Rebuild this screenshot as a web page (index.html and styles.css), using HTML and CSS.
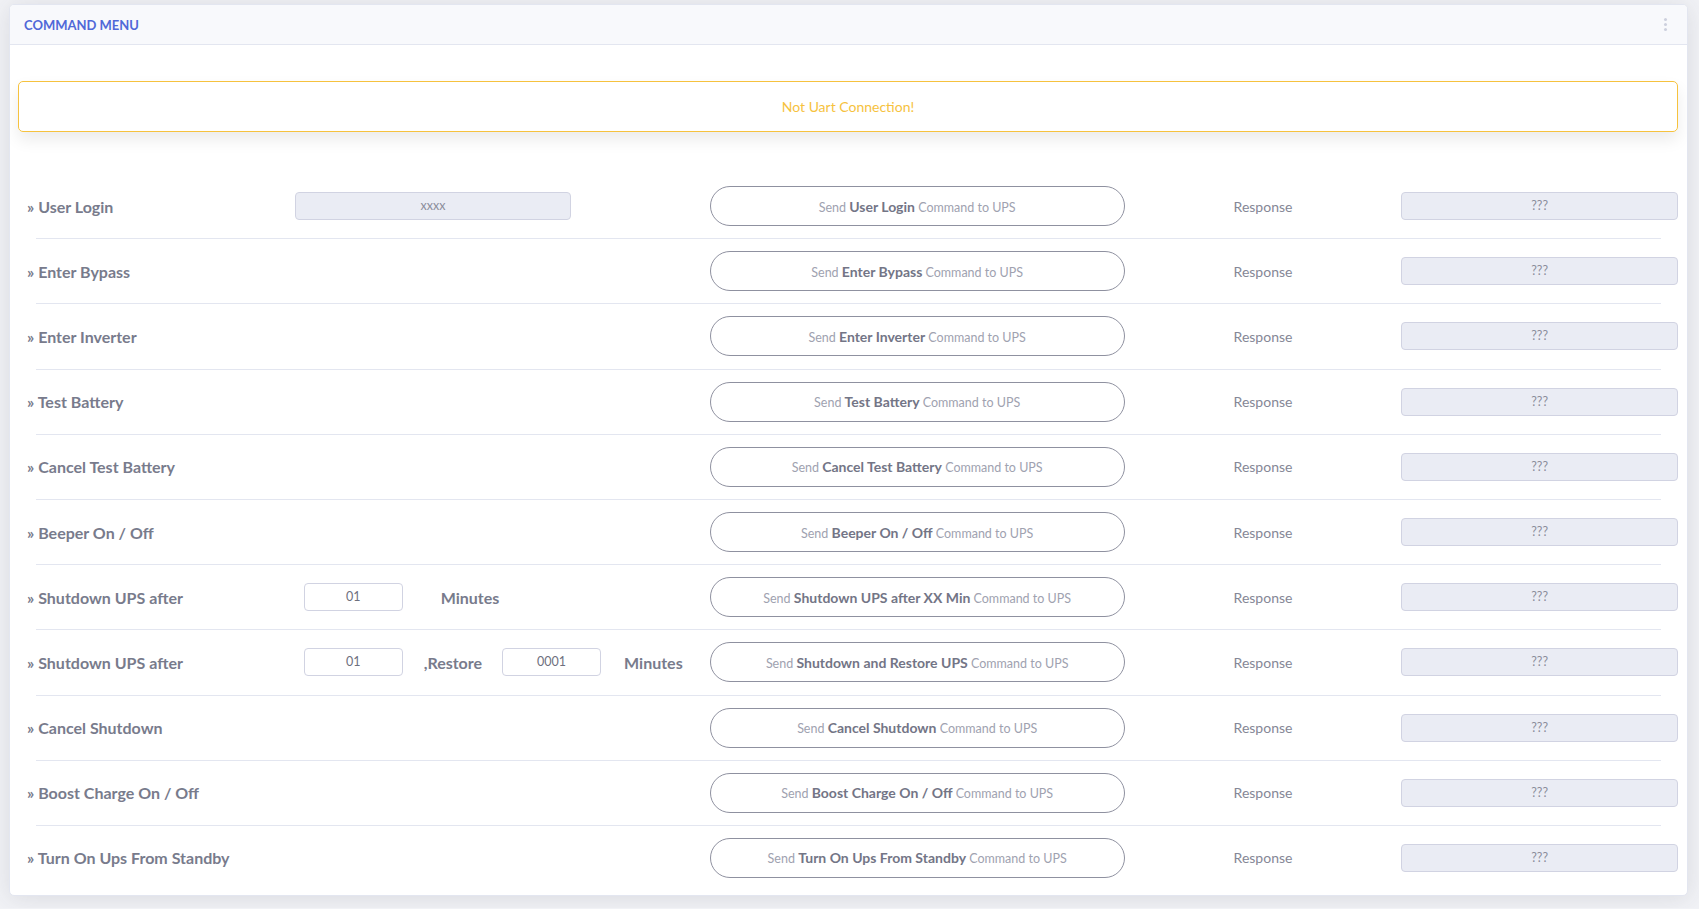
FILE: index.html
```html
<!DOCTYPE html>
<html lang="en">
<head>
    <meta charset="UTF-8">
    <title>Command Menu</title>
    <link rel="stylesheet" href="styles.css">
</head>
<body>
    <div class="page">
        <div class="card">
            <div class="card-header">
                <h6 class="card-title">COMMAND MENU</h6>
                <span class="kebab"><i></i><i></i><i></i></span>
            </div>
            <div class="card-body">
                <div class="alert">Not Uart Connection!</div>

                <div class="cmd-list">
                    <div class="cmd-row">
                        <div class="cmd-label">&raquo; User Login</div>
                        <div class="cmd-extra"><div class="field field-wide">xxxx</div></div>
                        <button class="cmd-btn">Send <b>User Login</b> Command to UPS</button>
                        <div class="cmd-resp">Response</div>
                        <div class="field resp-box">???</div>
                    </div>
                    <div class="cmd-row">
                        <div class="cmd-label">&raquo; Enter Bypass</div>
                        <div class="cmd-extra"></div>
                        <button class="cmd-btn">Send <b>Enter Bypass</b> Command to UPS</button>
                        <div class="cmd-resp">Response</div>
                        <div class="field resp-box">???</div>
                    </div>
                    <div class="cmd-row">
                        <div class="cmd-label">&raquo; Enter Inverter</div>
                        <div class="cmd-extra"></div>
                        <button class="cmd-btn">Send <b>Enter Inverter</b> Command to UPS</button>
                        <div class="cmd-resp">Response</div>
                        <div class="field resp-box">???</div>
                    </div>
                    <div class="cmd-row">
                        <div class="cmd-label">&raquo; Test Battery</div>
                        <div class="cmd-extra"></div>
                        <button class="cmd-btn">Send <b>Test Battery</b> Command to UPS</button>
                        <div class="cmd-resp">Response</div>
                        <div class="field resp-box">???</div>
                    </div>
                    <div class="cmd-row">
                        <div class="cmd-label">&raquo; Cancel Test Battery</div>
                        <div class="cmd-extra"></div>
                        <button class="cmd-btn">Send <b>Cancel Test Battery</b> Command to UPS</button>
                        <div class="cmd-resp">Response</div>
                        <div class="field resp-box">???</div>
                    </div>
                    <div class="cmd-row">
                        <div class="cmd-label">&raquo; Beeper On / Off</div>
                        <div class="cmd-extra"></div>
                        <button class="cmd-btn">Send <b>Beeper On / Off</b> Command to UPS</button>
                        <div class="cmd-resp">Response</div>
                        <div class="field resp-box">???</div>
                    </div>
                    <div class="cmd-row">
                        <div class="cmd-label">&raquo; Shutdown UPS after</div>
                        <div class="cmd-extra inline">
                            <div class="field field-small">01</div>
                            <span class="unit unit-min">Minutes</span>
                        </div>
                        <button class="cmd-btn">Send <b>Shutdown UPS after XX Min</b> Command to UPS</button>
                        <div class="cmd-resp">Response</div>
                        <div class="field resp-box">???</div>
                    </div>
                    <div class="cmd-row">
                        <div class="cmd-label">&raquo; Shutdown UPS after</div>
                        <div class="cmd-extra inline">
                            <div class="field field-small">01</div>
                            <span class="unit unit-restore">,Restore</span>
                            <div class="field field-small field-restore">0001</div>
                            <span class="unit unit-min2">Minutes</span>
                        </div>
                        <button class="cmd-btn">Send <b>Shutdown and Restore UPS</b> Command to UPS</button>
                        <div class="cmd-resp">Response</div>
                        <div class="field resp-box">???</div>
                    </div>
                    <div class="cmd-row">
                        <div class="cmd-label">&raquo; Cancel Shutdown</div>
                        <div class="cmd-extra"></div>
                        <button class="cmd-btn">Send <b>Cancel Shutdown</b> Command to UPS</button>
                        <div class="cmd-resp">Response</div>
                        <div class="field resp-box">???</div>
                    </div>
                    <div class="cmd-row">
                        <div class="cmd-label">&raquo; Boost Charge On / Off</div>
                        <div class="cmd-extra"></div>
                        <button class="cmd-btn">Send <b>Boost Charge On / Off</b> Command to UPS</button>
                        <div class="cmd-resp">Response</div>
                        <div class="field resp-box">???</div>
                    </div>
                    <div class="cmd-row">
                        <div class="cmd-label">&raquo; Turn On Ups From Standby</div>
                        <div class="cmd-extra"></div>
                        <button class="cmd-btn">Send <b>Turn On Ups From Standby</b> Command to UPS</button>
                        <div class="cmd-resp">Response</div>
                        <div class="field resp-box">???</div>
                    </div>
                </div>
            </div>
        </div>
    </div>
</body>
</html>
```

FILE: styles.css
```css
body {
    margin: 0;
    font-family: Lato, "Open Sans", sans-serif;
    background-color: #f1f2f6;
    color: #858796;
}
.page {
    padding: 4px 11px 12px 9px;
}
.card {
    background: #fff;
    border: 1px solid #e3e6f0;
    border-radius: 5px;
    box-shadow: 0 2px 24px rgba(58, 59, 69, 0.12);
    overflow: hidden;
}
.card-header {
    height: 39px;
    display: flex;
    align-items: center;
    justify-content: space-between;
    padding: 0 20px 0 14px;
    background-color: #f8f9fc;
    border-bottom: 1px solid #e3e6f0;
}
.card-title {
    margin: 0;
    font-size: 13px;
    font-weight: 700;
    color: #5068d8;
}
.kebab {
    display: flex;
    flex-direction: column;
    gap: 2px;
}
.kebab i {
    width: 3px;
    height: 3px;
    border-radius: 50%;
    background: #cdd0de;
}
.card-body {
    padding: 36px 9px 5px 8px;
}

/* warning alert */
.alert {
    height: 49px;
    line-height: 49px;
    border: 1px solid #f6c23e;
    border-radius: 5px;
    text-align: center;
    font-size: 14px;
    color: #f6c23e;
    box-shadow: 0 8px 16px rgba(0, 0, 0, 0.08);
}

/* command rows */
.cmd-list {
    margin-top: 42px;
}
.cmd-row {
    display: grid;
    grid-template-columns: repeat(12, 1fr);
    align-items: center;
    height: 64.2px;
}
.cmd-row + .cmd-row {
    background: linear-gradient(#e3e6f0, #e3e6f0) no-repeat 18px 0 / calc(100% - 35px) 1px;
    padding-top: 1px;
}
.cmd-label {
    grid-column: span 2;
    padding-left: 9px;
    font-size: 16px;
    font-weight: 700;
    color: #787b8c;
}
.cmd-extra {
    grid-column: span 3;
}
.cmd-extra.inline {
    display: flex;
    align-items: center;
    padding-left: 9px;
}
.field {
    box-sizing: border-box;
    height: 28px;
    line-height: 26px;
    border: 1px solid #d1d3e2;
    border-radius: 4px;
    background: #eaecf4;
    text-align: center;
    font-size: 12.5px;
    color: #8a8c9b;
}
.field-wide {
    width: 66.67%;
}
.field-small {
    width: 99px;
    background: #fff;
    color: #6e707e;
}
.unit {
    font-size: 16px;
    font-weight: 700;
    color: #787b8c;
}
.unit-min {
    margin-left: 38px;
}
.unit-restore {
    margin-left: 21px;
}
.field-restore {
    margin-left: 20px;
}
.unit-min2 {
    margin-left: 23px;
}
.cmd-btn {
    grid-column: span 3;
    height: 40px;
    border: 1px solid #8f91a0;
    border-radius: 20px;
    background: #fff;
    font-family: inherit;
    font-size: 12.5px;
    color: #a0a2b0;
    cursor: pointer;
}
.cmd-btn b {
    font-size: 14px;
    color: #737586;
}
.cmd-resp {
    grid-column: span 2;
    text-align: center;
    font-size: 14px;
    color: #858796;
}
.resp-box {
    grid-column: span 2;
}
```
